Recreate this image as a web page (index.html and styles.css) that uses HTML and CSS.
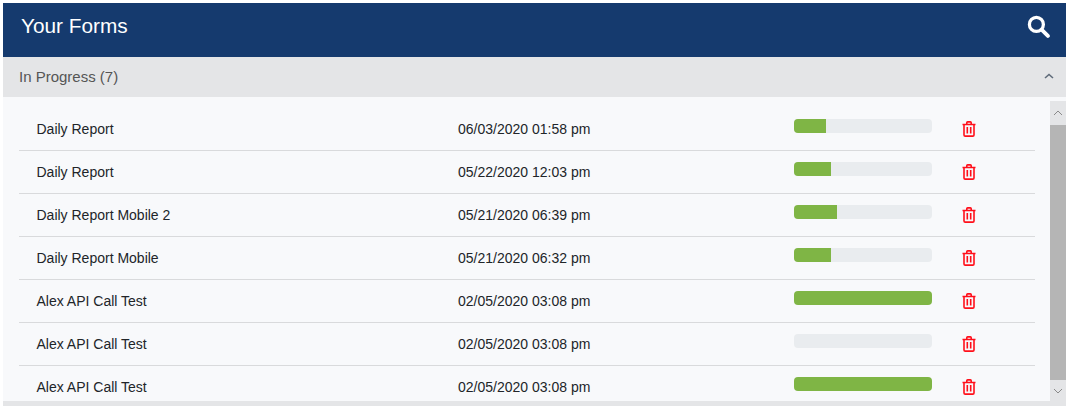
FILE: index.html
```html
<!DOCTYPE html>
<html lang="en">
<head>
  <meta charset="UTF-8" />
  <title>Your Forms</title>
  <link rel="stylesheet" href="styles.css">
</head>
<body>
  <svg class="defs" width="0" height="0">
    <symbol id="trash" viewBox="0 0 14 16">
      <path d="M.5 3.500h13M4.800 3.300V1.800c0-.5.300-.9.800-.9h2.800c.5 0 .8.400.8.900v1.500M2 3.500v10.400c0 .7.500 1.200 1.200 1.200h7.600c.7 0 1.200-.5 1.200-1.200V3.500M5.300 6v6.600M8.700 6v6.600" fill="none" stroke="currentColor" stroke-width="1.600"/>
    </symbol>
  </svg>

  <div class="card">
    <header class="top">
      <h1>Your Forms</h1>
      <svg class="search" viewBox="0 0 24 24" width="23" height="23">
        <circle cx="9.800" cy="9.800" r="7.300" fill="none" stroke="#fff" stroke-width="3.400"/>
        <path d="M15.500 15.500l6.300 6.300" stroke="#fff" stroke-width="4" stroke-linecap="round"/>
      </svg>
    </header>

    <div class="section">
      <span>In Progress (7)</span>
      <svg class="chev" viewBox="0 0 10 6" width="10" height="6"><path d="M1 5l4-3.500L9 5" fill="none" stroke="#5f6b7a" stroke-width="1.600"/></svg>
    </div>

    <div class="list-wrap">
      <div class="list" id="list"></div>
      <div class="scrollbar">
        <div class="sb-btn"><svg viewBox="0 0 10 6" width="10" height="6"><path d="M1 5l4-4 4 4" fill="none" stroke="#8a8a8a" stroke-width="1"/></svg></div>
        <div class="sb-thumb"></div>
        <div class="sb-btn"><svg viewBox="0 0 10 6" width="10" height="6"><path d="M1 1l4 4 4-4" fill="none" stroke="#8a8a8a" stroke-width="1"/></svg></div>
      </div>
    </div>
    <div class="foot"></div>
  </div>

  <script>
    const forms = [
      { name: "Daily Report", date: "06/03/2020 01:58 pm", pct: 23 },
      { name: "Daily Report", date: "05/22/2020 12:03 pm", pct: 27 },
      { name: "Daily Report Mobile 2", date: "05/21/2020 06:39 pm", pct: 31 },
      { name: "Daily Report Mobile", date: "05/21/2020 06:32 pm", pct: 27 },
      { name: "Alex API Call Test", date: "02/05/2020 03:08 pm", pct: 100 },
      { name: "Alex API Call Test", date: "02/05/2020 03:08 pm", pct: 0 },
      { name: "Alex API Call Test", date: "02/05/2020 03:08 pm", pct: 100 }
    ];

    const list = document.getElementById("list");
    forms.forEach(f => {
      list.innerHTML += `
        <div class="row">
          <div class="name">${f.name}</div>
          <div class="date">${f.date}</div>
          <div class="bar"><div class="fill" style="width: ${f.pct}%"></div></div>
          <svg class="trash" width="14" height="16"><use href="#trash"/></svg>
        </div>`;
    });
  </script>
</body>
</html>
```

FILE: styles.css
```css
body {
  margin: 0;
  padding: 3px 4px 0 3px;
  background: #fff;
  font-family: "Liberation Sans", Arial, sans-serif;
  color: #212529;
}

.defs {
  position: absolute;
}

.top {
  height: 54px;
  background: #153a6e;
  color: #fff;
  display: flex;
  align-items: center;
  justify-content: space-between;
  padding: 0 16px 8px 18px;
  box-sizing: border-box;
}

.top h1 {
  margin: 0;
  font-size: 20.8px;
  font-weight: 400;
}

.section {
  height: 38px;
  padding: 0 12px 2px 16px;
  background: #e4e5e7;
  color: #555;
  font-size: 15px;
  display: flex;
  align-items: center;
  justify-content: space-between;
}

.list-wrap {
  height: 304px;
  background: #f8f9fb;
  position: relative;
  overflow: hidden;
}

.list {
  padding: 11px 31px 0 16px;
}

.row {
  height: 42px;
  border-bottom: 1px solid #d9dadc;
  display: flex;
  align-items: center;
  font-size: 14px;
}

.row:last-child {
  border-bottom: 0;
}

.name {
  width: 421.5px;
  padding-left: 17.5px;
  flex: none;
}

.date {
  width: 336px;
  flex: none;
}

.bar {
  width: 138px;
  height: 14px;
  background: #e9ecef;
  border-radius: 4px;
  overflow: hidden;
  flex: none;
  margin-bottom: 6px;
}

.fill {
  height: 100%;
  background: #7fb545;
}

.trash {
  color: #ff0f1a;
  margin-left: 29.5px;
  flex: none;
}

.scrollbar {
  position: absolute;
  top: 4px;
  right: 0;
  bottom: 0;
  width: 16px;
  display: flex;
  flex-direction: column;
  background: #e4e5e7;
}

.sb-btn {
  height: 24px;
  display: flex;
  align-items: center;
  justify-content: center;
}

.sb-btn:last-child {
  height: 21px;
}

.sb-thumb {
  flex: 1;
  background: #b5b5b5;
}

.foot {
  height: 5px;
  background: #e4e5e7;
}
```
